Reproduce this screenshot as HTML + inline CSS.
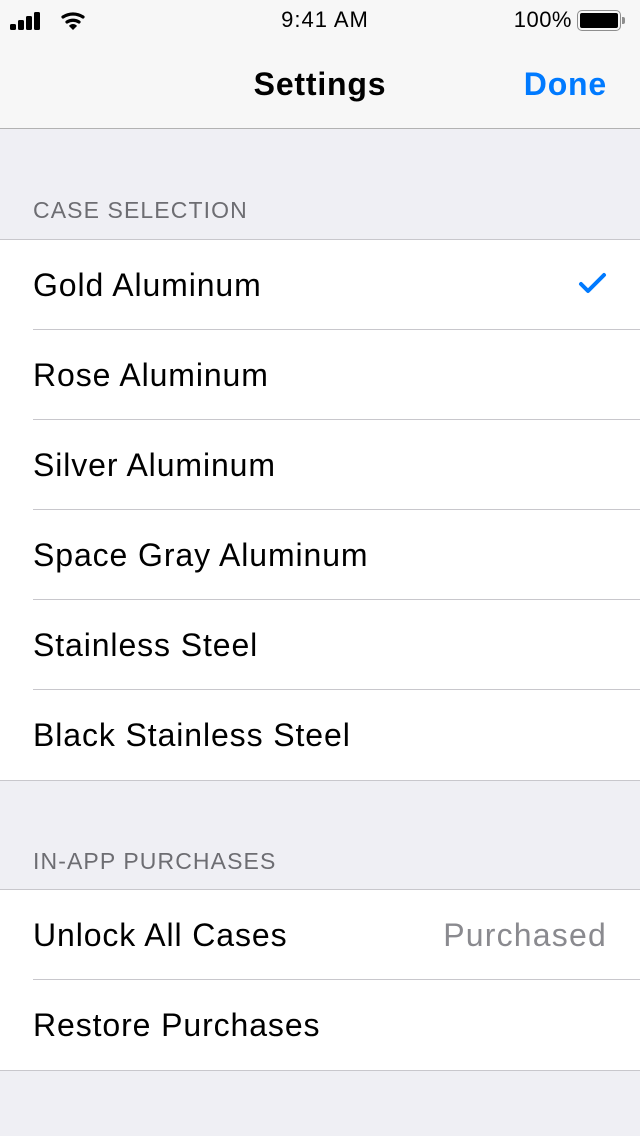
<!DOCTYPE html>
<html><head><meta charset="utf-8"><style>
*{margin:0;padding:0;box-sizing:border-box}
body{width:640px;height:1136px;background:#efeff4;font-family:"Liberation Sans",sans-serif;position:relative;overflow:hidden}
.nav{position:absolute;left:0;top:0;width:640px;height:129px;background:#f7f7f7;border-bottom:1px solid #b2b2b2}
.abs{position:absolute}
.hdr{position:absolute;left:33px;font-size:23px;color:#6d6d72;letter-spacing:1.1px}
.grp{position:absolute;left:0;width:640px;background:#fff;border-top:1px solid #c8c7cc;border-bottom:1px solid #c8c7cc}
.row{height:90px;position:relative;font-size:32px;color:#000;line-height:90px;padding-left:33px;letter-spacing:0.9px}
.row+.row:before{content:"";position:absolute;left:33px;right:0;top:-1px;border-top:1px solid #c8c7cc}
</style></head><body>
<div class="nav">
 <svg class="abs" style="left:10px;top:12px" width="80" height="20">
  <rect x="0" y="12" width="6" height="6" rx="1.5"/><rect x="8" y="8" width="6" height="10" rx="1.5"/><rect x="16" y="4" width="6" height="14" rx="1.5"/><rect x="24" y="0" width="6" height="18" rx="1.5"/>
  <path d="M53 5 A18 18 0 0 1 73 5" stroke="#000" stroke-width="3.2" fill="none" stroke-linecap="round"/>
  <path d="M57 10 A11 11 0 0 1 69 10" stroke="#000" stroke-width="3.2" fill="none" stroke-linecap="round"/>
  <path d="M63 18 L59 14 A5 5 0 0 1 67 14 Z"/>
 </svg>
 <div class="abs" style="left:0;width:650px;text-align:center;top:7px;font-size:22px;letter-spacing:1px">9:41 AM</div>
 <div class="abs" style="right:68px;top:7px;font-size:22px;letter-spacing:0.5px">100%</div>
 <div class="abs" style="left:577px;top:10px;width:44px;height:21px;border:1.5px solid #8e8e8e;border-radius:5px;padding:2px"><div style="background:#000;width:100%;height:100%;border-radius:2px"></div></div>
 <div class="abs" style="left:622px;top:17px;width:3px;height:7px;background:#8e8e8e;border-radius:0 2px 2px 0"></div>
 <div class="abs" style="left:0;width:640px;text-align:center;top:66px;font-size:32px;font-weight:bold;letter-spacing:0.8px">Settings</div>
 <div class="abs" style="right:33px;top:66px;font-size:32px;font-weight:bold;color:#007aff;letter-spacing:0.8px">Done</div>
</div>
<div class="hdr" style="top:197px">CASE SELECTION</div>
<div class="grp" style="top:239px">
 <div class="row">Gold Aluminum<svg class="abs" style="left:578px;top:32px" width="32" height="26"><path d="M3 12 L10 19 L26 3" stroke="#007aff" stroke-width="4" fill="none" stroke-linecap="round" stroke-linejoin="round"/></svg></div>
 <div class="row">Rose Aluminum</div>
 <div class="row">Silver Aluminum</div>
 <div class="row">Space Gray Aluminum</div>
 <div class="row">Stainless Steel</div>
 <div class="row">Black Stainless Steel</div>
</div>
<div class="hdr" style="top:848px">IN-APP PURCHASES</div>
<div class="grp" style="top:889px">
 <div class="row">Unlock All Cases<span class="abs" style="right:33px;top:0;color:#8a8a8f;letter-spacing:1.2px">Purchased</span></div>
 <div class="row">Restore Purchases</div>
</div>
</body></html>
